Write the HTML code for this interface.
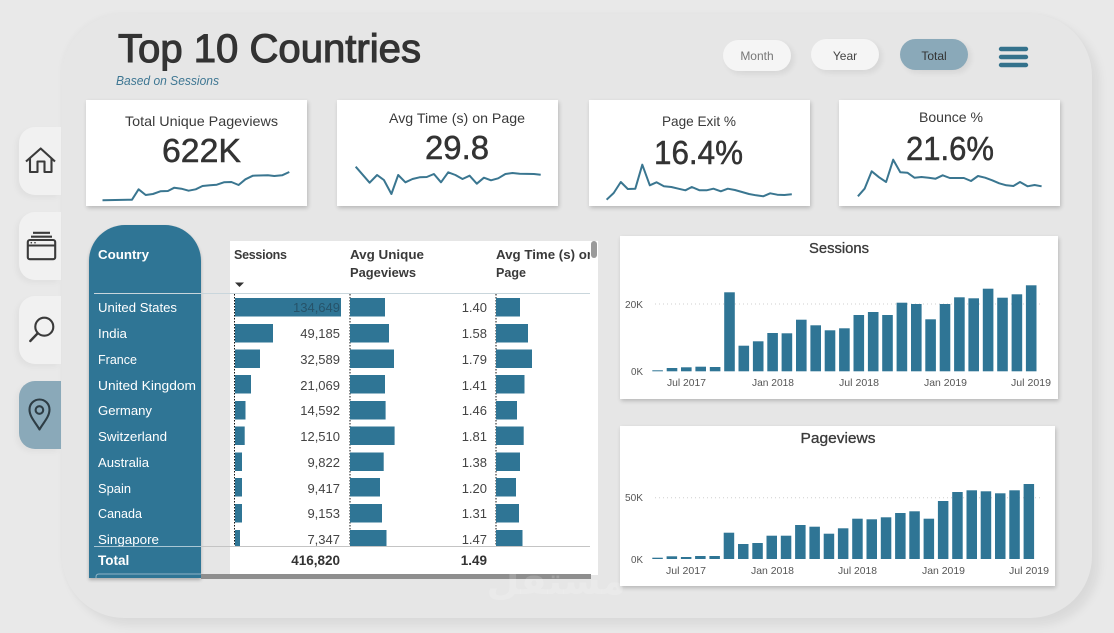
<!DOCTYPE html>
<html lang="en">
<head>
<meta charset="utf-8">
<title>Top 10 Countries</title>
<style>
html,body{margin:0;padding:0;width:1114px;height:633px;overflow:hidden;background:#e9e9e9}
.a{position:absolute;box-sizing:border-box}
#panel{left:62px;top:14px;width:1030px;height:604px;border-radius:62px;background:#e6e6e6;box-shadow:7px 7px 10px rgba(0,0,0,.07),-2px -2px 4px rgba(0,0,0,.02)}
.tab{left:19px;width:42px;height:68px;border-radius:16px 0 0 16px;background:#f1f1f1;box-shadow:-3px 3px 6px rgba(0,0,0,.04)}
.card{background:#fff;box-shadow:1px 2px 4px rgba(0,0,0,.2)}
.pill{border-radius:16px;background:#f5f5f5;box-shadow:3px 3px 6px rgba(0,0,0,.07)}
svg{position:absolute;left:0;top:0}
text{font-family:"Liberation Sans",sans-serif}
.n{font-size:13px;fill:#444;text-anchor:end}
.c{font-size:13px;fill:#fff}
.h{font-size:12.5px;font-weight:bold;fill:#3a3a3a}
.k{font-size:14px;fill:#3a3a3a}
.v{font-size:33px;fill:#333;stroke:#333;stroke-width:.5}
.d{font-size:10.5px;fill:#555}
</style>
</head>
<body>
<div class="a" id="panel"></div>
<div class="a tab" style="top:127px"></div>
<div class="a tab" style="top:212px"></div>
<div class="a tab" style="top:296px"></div>
<div class="a tab" style="top:381px;background:#8aa9b9"></div>

<div class="a card" style="left:86px;top:100px;width:221px;height:106px"></div>
<div class="a card" style="left:337px;top:100px;width:221px;height:106px"></div>
<div class="a card" style="left:589px;top:100px;width:221px;height:106px"></div>
<div class="a card" style="left:839px;top:100px;width:221px;height:106px"></div>

<div class="a card" style="left:620px;top:236px;width:438px;height:163px"></div>
<div class="a card" style="left:620px;top:426px;width:435px;height:160px"></div>

<div class="a pill" style="left:723px;top:40px;width:68px;height:31px"></div>
<div class="a pill" style="left:811px;top:39px;width:68px;height:31px"></div>
<div class="a pill" style="left:900px;top:39px;width:68px;height:31px;background:#8aa9b9"></div>

<div class="a" style="left:89px;top:225px;width:112px;height:353px;background:#2f7595;border-radius:36px 36px 0 0;box-shadow:0 2px 3px rgba(0,0,0,.25)"></div>
<div class="a" style="left:230px;top:241px;width:368px;height:334px;background:#fff"></div>

<svg width="1114" height="633" viewBox="0 0 1114 633" xmlns="http://www.w3.org/2000/svg">
<defs>
<clipPath id="hdr"><rect x="230" y="241" width="360" height="50"/></clipPath>
<clipPath id="low"><rect x="89" y="290" width="505" height="256"/></clipPath>
</defs>

<!-- Title -->
<text x="118" y="62" font-size="40" fill="#333" stroke="#333" stroke-width="1.1" textLength="303" lengthAdjust="spacingAndGlyphs">Top 10 Countries</text>
<text x="116" y="85" font-size="12.5" font-style="italic" fill="#3f7793" textLength="103" lengthAdjust="spacingAndGlyphs">Based on Sessions</text>

<!-- Buttons -->
<text x="757" y="60" font-size="12" fill="#777" text-anchor="middle">Month</text>
<text x="845" y="60" font-size="12" fill="#444" text-anchor="middle">Year</text>
<text x="934" y="60" font-size="12" fill="#333" text-anchor="middle">Total</text>
<path d="M1001,49H1026M1001,57H1026M1001,65H1026" stroke="#34728c" stroke-width="4.4" stroke-linecap="round" fill="none"/>

<!-- Nav icons -->
<g fill="none" stroke="#3a3a3a" stroke-width="2.1" stroke-linejoin="round">
<path d="M26,161.5L40.7,148.5L55,161.500"/>
<path d="M30,158V172H37.5V161.5H44.5V172H51.5V158"/>
<rect x="27.8" y="240" width="27.4" height="19.2" rx="2"/>
<path d="M28,245.5H55M31,236.7H52M33,232.8H50"/>
<circle cx="44.3" cy="326.7" r="9"/>
<path d="M30.3,341L37.5,333.5" stroke-linecap="round" stroke-width="2.4"/>
<path d="M39.5,429.5C36,423 29.5,417 29.5,409.5A10,10 0 0 1 49.5,409.5C49.5,417 43,423 39.5,429.5Z" stroke="#2e3d45"/>
<circle cx="39.4" cy="410" r="3.8" stroke="#2e3d45"/>
</g>
<circle cx="31.3" cy="242.7" r=".8" fill="#3a3a3a"/><circle cx="35" cy="242.7" r=".8" fill="#3a3a3a"/>

<!-- KPI cards -->
<text class="k" x="125" y="126" textLength="153" lengthAdjust="spacingAndGlyphs">Total Unique Pageviews</text>
<text class="v" x="162" y="162" textLength="79" lengthAdjust="spacingAndGlyphs">622K</text>
<text class="k" x="389" y="123" textLength="136" lengthAdjust="spacingAndGlyphs">Avg Time (s) on Page</text>
<text class="v" x="425" y="159" textLength="64" lengthAdjust="spacingAndGlyphs">29.8</text>
<text class="k" x="662" y="126" textLength="74" lengthAdjust="spacingAndGlyphs">Page Exit %</text>
<text class="v" x="654" y="164" textLength="89" lengthAdjust="spacingAndGlyphs">16.4%</text>
<text class="k" x="919" y="122" textLength="64" lengthAdjust="spacingAndGlyphs">Bounce %</text>
<text class="v" x="906" y="160" textLength="88" lengthAdjust="spacingAndGlyphs">21.6%</text>

<g fill="none" stroke="#3a7690" stroke-width="2" stroke-linejoin="round">
<polyline points="102.5,200.3 132,199.7 138.6,189.3 145.7,195 152.9,194 160.4,191.3 167.9,191 174.3,187.7 181.4,188.7 188.6,190.7 195.7,189.3 202.5,186 210,185.3 216.8,184.7 223.9,182.3 231.4,182 238.6,185 245.4,179.3 252.9,175.7 267.9,175.3 274.3,176 282.1,175.3 289.3,172"/>
<polyline points="355.7,166.7 369.6,182.7 377.1,175 383.9,180 391.4,194 398.2,175 405.4,182.3 412.5,179 419.6,177.3 426.8,177 433.9,174 441,182.3 448.2,172.3 455.4,175 462.5,179 469.6,175.7 476.8,183.7 483.9,177.7 491,180.3 498.2,178.3 505.4,174 512.5,173 519.6,173.7 533.9,174 540.7,174.7"/>
<polyline points="606.6,199.7 613.7,193 620.8,182 627.8,189 635.3,188.7 642.3,164.7 649.8,185.3 656.5,182.3 663.9,186.3 671.3,187 678.4,188.7 685.4,190.3 691.8,187 699.6,190.3 706.6,190.3 713.4,188.7 720.8,191.3 727.8,188.7 734.9,190 742,192 749,194 756.1,195.3 763.2,196.3 770.2,193.3 777.3,194.7 784.4,195 791.8,194.3"/>
<polyline points="857.9,196.3 864.6,188.7 871.7,171.3 879.1,177.3 886.1,182 893.2,159.7 900.3,172.3 907.4,172.7 914.4,177.7 921.5,177 928.6,177.7 935.6,178.7 942.7,175.3 949.8,178 956.8,178 963.9,178 971,181 978,176 985.1,177.7 992.2,180.3 999.2,183.3 1006.3,185.3 1013.4,186 1020,182 1027.5,186.3 1034.6,185 1041.6,186.3"/>
</g>

<!-- Table header -->
<text x="98" y="259" font-size="12.5" font-weight="bold" fill="#fff" textLength="51" lengthAdjust="spacingAndGlyphs">Country</text>
<g clip-path="url(#hdr)">
<text class="h" x="234" y="259" textLength="53">Sessions</text>
<text class="h" x="350" y="259" textLength="74" lengthAdjust="spacingAndGlyphs">Avg Unique</text>
<text class="h" x="350" y="277" textLength="66" lengthAdjust="spacingAndGlyphs">Pageviews</text>
<text class="h" x="496" y="259" textLength="99" lengthAdjust="spacingAndGlyphs">Avg Time (s) on</text>
<text class="h" x="496" y="277" textLength="30" lengthAdjust="spacingAndGlyphs">Page</text>
</g>
<path d="M235,282.5H244L239.5,287Z" fill="#333"/>
<rect x="591" y="241" width="6" height="17" rx="3" fill="#9a9a9a"/>
<path d="M94,293.5H590" stroke="#c9d6dc" stroke-width="1"/>

<!-- Dotted column lines -->
<path d="M234.5,294V546M350,294V546M496,294V546" stroke="#111" stroke-width="1" stroke-dasharray="1.5 1.5"/>

<!-- Bars -->
<g clip-path="url(#low)" fill="#2f7595">
<path d="M235,298H341V316.5H235Z M235,324H273V342.5H235Z M235,349.500H260V368H235Z M235,375H251V393.500H235Z M235,401H245.500V419.500H235Z M235,426.500H244.700V445H235Z M235,452.500H242V471H235Z M235,478H242V496.500H235Z M235,504H242V522.500H235Z M235,530H240V548H235Z"/>
<path d="M350,298H385V316.5H350Z M350,324H389V342.5H350Z M350,349.500H394V368H350Z M350,375H385V393.500H350Z M350,401H385.600V419.500H350Z M350,426.500H394.600V445H350Z M350,452.500H383.700V471H350Z M350,478H380V496.500H350Z M350,504H382V522.500H350Z M350,530H386.500V548H350Z"/>
<path d="M496,298H520V316.5H496Z M496,324H528V342.5H496Z M496,349.500H532V368H496Z M496,375H524.500V393.500H496Z M496,401H517V419.500H496Z M496,426.500H523.700V445H496Z M496,452.500H520V471H496Z M496,478H516V496.500H496Z M496,504H519V522.500H496Z M496,530H522.500V548H496Z"/>

<!-- Rows -->
<text class="c" x="98" y="312" textLength="79" lengthAdjust="spacingAndGlyphs">United States</text>
<text class="c" x="98" y="338" textLength="29" lengthAdjust="spacingAndGlyphs">India</text>
<text class="c" x="98" y="364" textLength="39" lengthAdjust="spacingAndGlyphs">France</text>
<text class="c" x="98" y="390" textLength="98" lengthAdjust="spacingAndGlyphs">United Kingdom</text>
<text class="c" x="98" y="415" textLength="54" lengthAdjust="spacingAndGlyphs">Germany</text>
<text class="c" x="98" y="441" textLength="69" lengthAdjust="spacingAndGlyphs">Switzerland</text>
<text class="c" x="98" y="467" textLength="51" lengthAdjust="spacingAndGlyphs">Australia</text>
<text class="c" x="98" y="493" textLength="33" lengthAdjust="spacingAndGlyphs">Spain</text>
<text class="c" x="98" y="518" textLength="44" lengthAdjust="spacingAndGlyphs">Canada</text>
<text class="c" x="98" y="544" textLength="61" lengthAdjust="spacingAndGlyphs">Singapore</text>

<text class="n" x="340" y="312" style="fill:#26536a">134,649</text>
<text class="n" x="340" y="338">49,185</text>
<text class="n" x="340" y="364">32,589</text>
<text class="n" x="340" y="390">21,069</text>
<text class="n" x="340" y="415">14,592</text>
<text class="n" x="340" y="441">12,510</text>
<text class="n" x="340" y="467">9,822</text>
<text class="n" x="340" y="493">9,417</text>
<text class="n" x="340" y="518">9,153</text>
<text class="n" x="340" y="544">7,347</text>

<text class="n" x="487" y="312">1.40</text>
<text class="n" x="487" y="338">1.58</text>
<text class="n" x="487" y="364">1.79</text>
<text class="n" x="487" y="390">1.41</text>
<text class="n" x="487" y="415">1.46</text>
<text class="n" x="487" y="441">1.81</text>
<text class="n" x="487" y="467">1.38</text>
<text class="n" x="487" y="493">1.20</text>
<text class="n" x="487" y="518">1.31</text>
<text class="n" x="487" y="544">1.47</text>
</g>

<!-- Total row -->
<path d="M94,546.500H201" stroke="#a9c7d5"/>
<path d="M201,546.500H590" stroke="#c4c4c4"/>
<text x="98" y="565" font-size="13.5" font-weight="bold" fill="#fff">Total</text>
<text x="340" y="565" font-size="13.5" font-weight="bold" fill="#333" text-anchor="end">416,820</text>
<text x="487" y="565" font-size="13.5" font-weight="bold" fill="#333" text-anchor="end">1.49</text>

<!-- Bottom scrollbar -->
<rect x="201" y="574" width="390" height="5" fill="#8e8e8e"/>
<path d="M96,578V577Q96,574 99,574H201" fill="none" stroke="#8fb4c6" stroke-width="1"/>

<!-- Sessions chart -->
<text x="839" y="253" font-size="15" fill="#3a3a3a" stroke="#3a3a3a" stroke-width=".3" text-anchor="middle" textLength="60" lengthAdjust="spacingAndGlyphs">Sessions</text>
<path d="M655,304H1040" stroke="#cfcfcf" stroke-dasharray="1 3"/>
<text class="d" x="625" y="308" textLength="18" lengthAdjust="spacingAndGlyphs">20K</text>
<text class="d" x="631" y="375" textLength="12" lengthAdjust="spacingAndGlyphs">0K</text>
<text class="d" x="667" y="386" textLength="39" lengthAdjust="spacingAndGlyphs">Jul 2017</text>
<text class="d" x="752" y="386" textLength="42" lengthAdjust="spacingAndGlyphs">Jan 2018</text>
<text class="d" x="839" y="386" textLength="40" lengthAdjust="spacingAndGlyphs">Jul 2018</text>
<text class="d" x="924" y="386" textLength="43" lengthAdjust="spacingAndGlyphs">Jan 2019</text>
<text class="d" x="1011" y="386" textLength="40" lengthAdjust="spacingAndGlyphs">Jul 2019</text>
<g fill="#2f7595">
<rect x="652.3" y="370.3" width="10.6" height="1"/>
<rect x="666.7" y="368" width="10.6" height="3.3"/>
<rect x="681" y="367.3" width="10.6" height="4"/>
<rect x="695.4" y="366.7" width="10.6" height="4.6"/>
<rect x="709.8" y="367" width="10.6" height="4.3"/>
<rect x="724.2" y="292.3" width="10.6" height="79"/>
<rect x="738.5" y="345.7" width="10.6" height="25.6"/>
<rect x="752.9" y="341.3" width="10.6" height="30"/>
<rect x="767.3" y="333" width="10.6" height="38.3"/>
<rect x="781.6" y="333.3" width="10.6" height="38"/>
<rect x="796" y="319.7" width="10.6" height="51.6"/>
<rect x="810.4" y="325.3" width="10.6" height="46"/>
<rect x="824.7" y="330.3" width="10.6" height="41"/>
<rect x="839.1" y="328.3" width="10.6" height="43"/>
<rect x="853.5" y="315" width="10.6" height="56.3"/>
<rect x="867.9" y="312" width="10.6" height="59.3"/>
<rect x="882.2" y="315" width="10.6" height="56.3"/>
<rect x="896.6" y="302.7" width="10.6" height="68.6"/>
<rect x="911" y="304" width="10.6" height="67.3"/>
<rect x="925.3" y="319.3" width="10.6" height="52"/>
<rect x="939.7" y="304" width="10.6" height="67.3"/>
<rect x="954.1" y="297.3" width="10.6" height="74"/>
<rect x="968.4" y="298.3" width="10.6" height="73"/>
<rect x="982.8" y="288.7" width="10.6" height="82.6"/>
<rect x="997.2" y="297.7" width="10.6" height="73.6"/>
<rect x="1011.6" y="294.3" width="10.6" height="77"/>
<rect x="1025.9" y="285.3" width="10.6" height="86"/>
</g>

<!-- Pageviews chart -->
<text x="838" y="443" font-size="15" fill="#3a3a3a" stroke="#3a3a3a" stroke-width=".3" text-anchor="middle" textLength="75" lengthAdjust="spacingAndGlyphs">Pageviews</text>
<path d="M655,497.700H1040" stroke="#cfcfcf" stroke-dasharray="1 3"/>
<text class="d" x="625" y="501" textLength="18" lengthAdjust="spacingAndGlyphs">50K</text>
<text class="d" x="631" y="563" textLength="12" lengthAdjust="spacingAndGlyphs">0K</text>
<text class="d" x="666" y="574" textLength="40" lengthAdjust="spacingAndGlyphs">Jul 2017</text>
<text class="d" x="751" y="574" textLength="43" lengthAdjust="spacingAndGlyphs">Jan 2018</text>
<text class="d" x="838" y="574" textLength="39" lengthAdjust="spacingAndGlyphs">Jul 2018</text>
<text class="d" x="922" y="574" textLength="43" lengthAdjust="spacingAndGlyphs">Jan 2019</text>
<text class="d" x="1009" y="574" textLength="40" lengthAdjust="spacingAndGlyphs">Jul 2019</text>
<g fill="#2f7595">
<rect x="652.3" y="557.7" width="10.5" height="1.3"/>
<rect x="666.6" y="556.3" width="10.5" height="2.7"/>
<rect x="680.9" y="557" width="10.5" height="2"/>
<rect x="695.1" y="556" width="10.5" height="3"/>
<rect x="709.4" y="556" width="10.5" height="3"/>
<rect x="723.7" y="532.7" width="10.5" height="26.3"/>
<rect x="738" y="544" width="10.5" height="15"/>
<rect x="752.3" y="543" width="10.5" height="16"/>
<rect x="766.5" y="535.7" width="10.5" height="23.3"/>
<rect x="780.8" y="535.7" width="10.5" height="23.3"/>
<rect x="795.1" y="525" width="10.5" height="34"/>
<rect x="809.4" y="526.7" width="10.5" height="32.3"/>
<rect x="823.7" y="533.7" width="10.5" height="25.3"/>
<rect x="837.9" y="528.3" width="10.5" height="30.7"/>
<rect x="852.2" y="518.7" width="10.5" height="40.3"/>
<rect x="866.5" y="519.3" width="10.5" height="39.7"/>
<rect x="880.8" y="517.3" width="10.5" height="41.7"/>
<rect x="895.1" y="513" width="10.5" height="46"/>
<rect x="909.3" y="511.3" width="10.5" height="47.7"/>
<rect x="923.6" y="518.7" width="10.5" height="40.3"/>
<rect x="937.9" y="501" width="10.5" height="58"/>
<rect x="952.2" y="492" width="10.5" height="67"/>
<rect x="966.5" y="490.3" width="10.5" height="68.7"/>
<rect x="980.7" y="491.3" width="10.5" height="67.7"/>
<rect x="995" y="493.3" width="10.5" height="65.7"/>
<rect x="1009.3" y="490.3" width="10.5" height="68.7"/>
<rect x="1023.6" y="484" width="10.5" height="75"/>
</g>

<!-- Watermark -->
<text x="556" y="594" font-size="38" font-weight="bold" fill="#fff" fill-opacity=".16" text-anchor="middle" style="font-family:'DejaVu Sans',sans-serif" direction="rtl">مستقل</text>
</svg>
</body>
</html>
